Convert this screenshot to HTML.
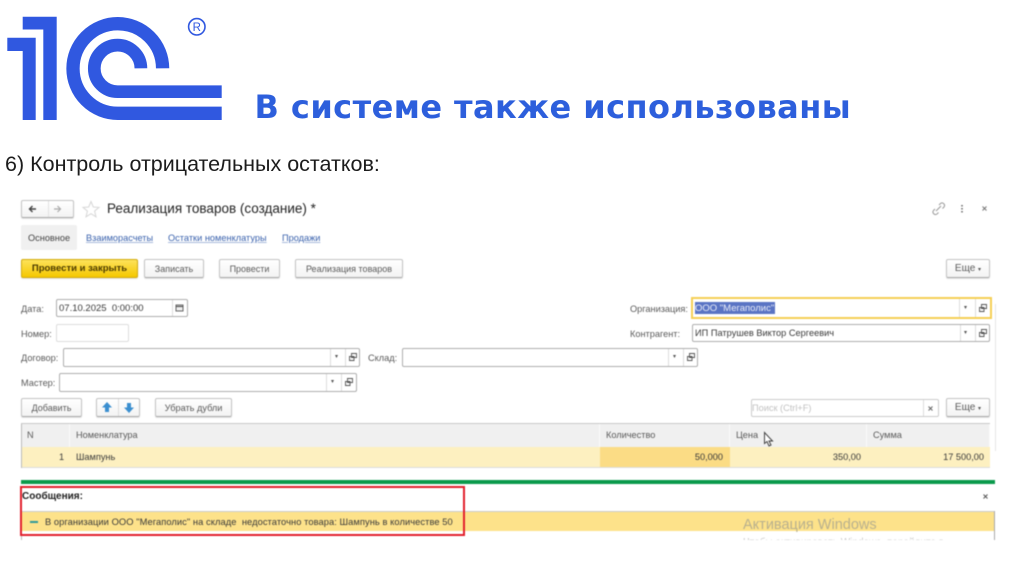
<!DOCTYPE html>
<html lang="ru"><head><meta charset="utf-8"><title>В системе также использованы</title>
<style>
html,body{margin:0;padding:0;background:#fff}
#p{position:relative;width:1024px;height:574px;overflow:hidden;background:#fff;font-family:"Liberation Sans",sans-serif}
#p div{position:absolute;box-sizing:border-box;white-space:pre}
.ui{left:0;top:0;width:1024px;height:574px;filter:blur(.45px)}
.t{font-size:9.2px;color:#5a5a5a;line-height:12px;margin-top:2px}
.d{color:#3a3a3a}
.l{color:#3a62ad;text-decoration:underline;text-decoration-color:#a9bbdc}
.b{border:1px solid #c4c4c4;border-bottom-color:#aaa;border-radius:2px;background:linear-gradient(#fff,#f3f3f3);height:19px;top:259px;font-size:9px;color:#5a5a5a;text-align:center;line-height:18px;box-shadow:0 1px 1px rgba(0,0,0,.12)}
.i{border:1px solid #aeaeae;border-radius:2px;background:#fff}
.v{width:1px;background:#ddd}
.ar{font-size:6px;color:#555;line-height:8px}
.h{top:423px;height:24px;background:#f0f0f0;border-right:1px solid #fafafa}
.c{top:447px;height:20px;background:#fdf0c0}
</style></head><body><div id="p">
<svg style="position:absolute;left:0;top:0" width="240" height="130" viewBox="0 0 240 130">
<path fill="#3058e0" d="M22.7 16.7H56.7V120H43.3V29.5H22.7ZM7.3 37.7H35.7V120H22.7V51H7.3Z"/>
<path fill="none" stroke="#3058e0" stroke-width="13.3" d="M162.6 68.3A44.8 44.8 0 1 0 117.8 113.3H221.7"/>
<path fill="none" stroke="#3058e0" stroke-width="12.7" d="M140.9 68.3A23.3 23.3 0 1 0 117.6 91.7H221.7"/>
<circle cx="196.8" cy="26.8" r="8.2" fill="none" stroke="#3058e0" stroke-width="1.6"/>
<text x="196.8" y="31" text-anchor="middle" font-family="Liberation Sans" font-size="11.5" fill="#3058e0">R</text>
</svg>
<div style="left:254.500px;top:87px;font-family:'DejaVu Sans',sans-serif;font-size:32px;line-height:40px;font-weight:700;color:#2d5fdc;letter-spacing:.44px">В системе также использованы</div>
<div style="left:5px;top:152px;font-size:21.5px;line-height:24px;color:#1c1c1c">6) Контроль отрицательных остатков:</div>

<div class="ui">
<div class="b" style="left:21px;top:200px;width:53px;height:18px"></div>
<div class="v" style="left:48px;top:201px;height:16px;background:#e2e2e2"></div>
<svg style="position:absolute;left:21px;top:200px" width="80" height="18" viewBox="0 0 80 18">
<path d="M15 9H9M11.5 6 8.5 9l3 3" fill="none" stroke="#444" stroke-width="1.4"/>
<path d="M33 9h6M36.5 6l3 3-3 3" fill="none" stroke="#aaa" stroke-width="1.2"/>
<path d="M70 1.500l2.300 5.500 5.700.4-4.400 3.700 1.400 5.700-5-3.100-5 3.100 1.400-5.700L62 7.400l5.700-.4z" fill="#fff" stroke="#d6d6d6"/>
</svg>
<div style="left:107px;top:201px;font-size:13.5px;line-height:16px;color:#222">Реализация товаров (создание) *</div>
<svg style="position:absolute;left:930px;top:200px" width="64" height="18" viewBox="0 0 64 18">
<path d="M6 11l5-5M5 9l-1.500 1.500a2.500 2.500 0 0 0 3.500 3.500L8.500 12.500M9 5l1.500-1.500a2.500 2.500 0 0 1 3.500 3.500L12.500 8.500" fill="none" stroke="#999" stroke-width="1"/>
<path d="M32 5v1.500M32 8v1.500M32 11v1.500" stroke="#666" stroke-width="1.500"/>
<path d="M52.500 6.500l4 4m0-4-4 4" stroke="#777" stroke-width="1"/>
</svg>

<div style="left:21px;top:225px;width:56px;height:25px;background:#f0f0f0;border-radius:2px"></div>
<div class="t" style="left:28px;top:230px;color:#444">Основное</div>
<div class="t l" style="left:86px;top:230px">Взаиморасчеты</div>
<div class="t l" style="left:168px;top:230px;letter-spacing:.02px">Остатки номенклатуры</div>
<div class="t l" style="left:282px;top:230px">Продажи</div>

<div class="b" style="left:21px;width:117px;background:linear-gradient(#fde25a,#f5c800);border-color:#d2ab10;color:#4a3a00;font-weight:700;font-size:9.500px">Провести и закрыть</div>
<div class="b" style="left:144px;width:60px">Записать</div>
<div class="b" style="left:219px;width:61px">Провести</div>
<div class="b" style="left:295px;width:108px">Реализация товаров</div>
<div class="b" style="left:946px;width:44px;font-size:10px">Еще <span style="font-size:6px">▾</span></div>

<div class="t" style="left:21px;top:300.500px">Дата:</div>
<div class="i" style="left:56px;top:299px;width:132px;height:18px"></div>
<div class="v" style="left:172px;top:300px;height:16px"></div>
<div class="t d" style="left:59px;top:301px;font-size:9.500px">07.10.2025  0:00:00</div>
<svg style="position:absolute;left:175px;top:303px" width="10" height="10"><path d="M1 2h7v6H1z" fill="#eee" stroke="#666"/><path d="M1 3.500h7" stroke="#444"/></svg>

<div class="t" style="left:21px;top:325.500px">Номер:</div>
<div class="i" style="left:56px;top:324px;width:73px;height:18px;border-color:#ddd"></div>

<div class="t" style="left:21px;top:350px">Договор:</div>
<div class="i" style="left:63px;top:348px;width:297px;height:19px"></div>
<div class="v" style="left:330px;top:349px;height:17px"></div><div class="v" style="left:345px;top:349px;height:17px"></div>
<div class="ar" style="left:335px;top:353px">▾</div>
<svg style="position:absolute;left:348px;top:352px" width="10" height="10"><path d="M3.500 1.500h5v4h-5zM1.500 4.500h4.500v4h-4.500z" fill="#fff" stroke="#555" stroke-width=".9"/></svg>

<div class="t" style="left:368px;top:350px">Склад:</div>
<div class="i" style="left:402px;top:348px;width:296px;height:19px"></div>
<div class="v" style="left:668px;top:349px;height:17px"></div><div class="v" style="left:683px;top:349px;height:17px"></div>
<div class="ar" style="left:673px;top:353px">▾</div>
<svg style="position:absolute;left:686px;top:352px" width="10" height="10"><path d="M3.500 1.500h5v4h-5zM1.500 4.500h4.500v4h-4.500z" fill="#fff" stroke="#555" stroke-width=".9"/></svg>

<div class="t" style="left:21px;top:375px">Мастер:</div>
<div class="i" style="left:59px;top:373px;width:298px;height:19px"></div>
<div class="v" style="left:326px;top:374px;height:17px"></div><div class="v" style="left:341px;top:374px;height:17px"></div>
<div class="ar" style="left:331px;top:378px">▾</div>
<svg style="position:absolute;left:344px;top:377px" width="10" height="10"><path d="M3.500 1.500h5v4h-5zM1.500 4.500h4.500v4h-4.500z" fill="#fff" stroke="#555" stroke-width=".9"/></svg>

<div class="t" style="left:630px;top:300.500px">Организация:</div>
<div style="left:691px;top:297px;width:301px;height:22px;border:2px solid #f5cf55;background:#fff"></div>
<div style="left:695px;top:302px;width:80px;height:12px;background:#5a74c4"></div>
<div class="t" style="left:695px;top:300.500px;color:#e8ecf8;font-size:9.500px">ООО "Мегаполис"</div>
<div class="v" style="left:959px;top:299px;height:18px"></div><div class="v" style="left:975px;top:299px;height:18px"></div>
<div class="ar" style="left:964px;top:304px">▾</div>
<svg style="position:absolute;left:978px;top:303px" width="10" height="10"><path d="M3.500 1.500h5v4h-5zM1.500 4.500h4.500v4h-4.500z" fill="#fff" stroke="#555" stroke-width=".9"/></svg>

<div class="t" style="left:630px;top:325.500px">Контрагент:</div>
<div class="i" style="left:692px;top:324px;width:298px;height:18px"></div>
<div class="v" style="left:960px;top:325px;height:16px"></div><div class="v" style="left:975px;top:325px;height:16px"></div>
<div class="t d" style="left:695px;top:325px;letter-spacing:.03px">ИП Патрушев Виктор Сергеевич</div>
<div class="ar" style="left:964px;top:329px">▾</div>
<svg style="position:absolute;left:978px;top:328px" width="10" height="10"><path d="M3.500 1.500h5v4h-5zM1.500 4.500h4.500v4h-4.500z" fill="#fff" stroke="#555" stroke-width=".9"/></svg>

<div class="v" style="left:995px;top:304px;height:147px;background:#e6e6e6"></div>

<div class="b" style="left:21px;top:398px;width:61px">Добавить</div>
<div class="b" style="left:96px;top:398px;width:44px"></div>
<div class="v" style="left:118px;top:399px;height:17px"></div>
<svg style="position:absolute;left:96px;top:398px" width="44" height="19"><path d="M11 4l5 5.500h-3V14H9V9.500H6z" fill="#3b8fd0"/><path d="M33 15l-5-5.500h3V5h4v4.500h3z" fill="#3b8fd0"/></svg>
<div class="b" style="left:155px;top:398px;width:77px;font-size:9.200px">Убрать дубли</div>

<div class="i" style="left:751px;top:399px;width:188px;height:18px;border-color:#ccc"></div>
<div class="v" style="left:923px;top:400px;height:16px"></div>
<div class="t" style="left:752px;top:400px;color:#c2c2c2">Поиск (Ctrl+F)</div>
<svg style="position:absolute;left:927px;top:405px" width="8" height="8"><path d="M1.500 1.500l4 4m0-4-4 4" stroke="#666"/></svg>
<div class="b" style="left:946px;top:398px;width:44px;font-size:10px">Еще <span style="font-size:6px">▾</span></div>

<div style="left:21px;top:423px;width:969px;height:1px;background:#c9c9c9;z-index:2"></div>
<div class="h" style="left:21px;width:49px"></div>
<div class="h" style="left:70px;width:530px"></div>
<div class="h" style="left:600px;width:130px"></div>
<div class="h" style="left:730px;width:137px"></div>
<div class="h" style="left:867px;width:123px"></div>
<div class="t" style="left:27px;top:427px">N</div>
<div class="t" style="left:76px;top:427px">Номенклатура</div>
<div class="t" style="left:606px;top:427px">Количество</div>
<div class="t" style="left:736px;top:427px">Цена</div>
<div class="t" style="left:873px;top:427px">Сумма</div>
<div class="c" style="left:21px;width:579px"></div>
<div class="c" style="left:600px;width:130px;background:#fbdc85"></div>
<div class="c" style="left:730px;width:260px"></div>
<div style="left:21px;top:467px;width:969px;height:1px;background:#ddd"></div>
<div style="left:21px;top:423px;width:1px;height:45px;background:#bbb"></div>
<div class="t d" style="left:59px;top:449px">1</div>
<div class="t d" style="left:76px;top:449px">Шампунь</div>
<div class="t d" style="left:600px;top:449px;width:123px;text-align:right">50,000</div>
<div class="t d" style="left:730px;top:449px;width:131px;text-align:right">350,00</div>
<div class="t d" style="left:867px;top:449px;width:117px;text-align:right">17 500,00</div>
<svg style="position:absolute;left:762px;top:431px" width="13" height="17"><path d="M2.500 1.500v11l2.500-2 2 4.500 2-1-2-4h3.500z" fill="#fff" stroke="#444"/></svg>

<div style="left:21px;top:480px;width:974px;height:4px;background:#0b9a4c"></div>
<div class="t" style="left:22px;top:489px;font-weight:700;color:#222;font-size:10px">Сообщения:</div>
<svg style="position:absolute;left:982px;top:493px" width="8" height="8"><path d="M1.500 1.500l4 4m0-4-4 4" stroke="#555"/></svg>
<div style="left:21px;top:511px;width:974px;height:20px;background:#fde28a;border-top:1px solid #ccc"></div>
<div style="left:21px;top:511px;width:1px;height:29px;background:#bbb"></div>
<div style="left:994px;top:511px;width:1px;height:29px;background:#aaa"></div>
<div style="left:30px;top:521px;width:8px;height:1.500px;background:#2f9a9a"></div>
<div class="t d" style="left:45px;top:514px;font-size:9.330px;letter-spacing:.06px">В организации ООО "Мегаполис" на складе  недостаточно товара: Шампунь в количестве 50</div>
<div style="left:743px;top:517px;font-size:14.500px;line-height:17px;color:#b8b08e">Активация Windows</div>
<div style="left:743px;top:537px;width:250px;height:3px;overflow:hidden;font-size:10px;line-height:12px;color:#ccc">Чтобы активировать Windows, перейдите в</div>
<div style="left:20px;top:486px;width:445px;height:50px;border:2px solid #e2202c"></div>
</div>
</div></body></html>
